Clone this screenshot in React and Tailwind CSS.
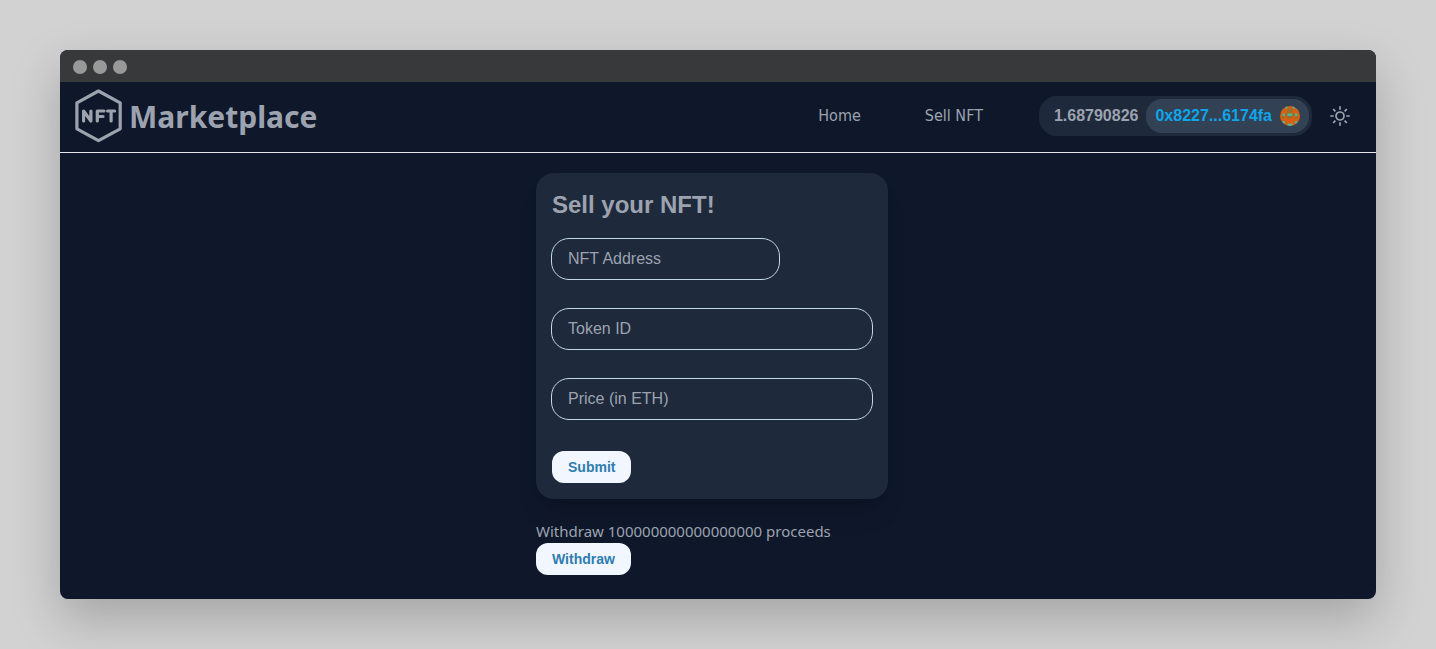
const identicon = [
  "00100100",
  "10022001",
  "00022000",
  "01211210",
  "02022020",
  "00000000",
  "01000010",
  "00011000",
];
const identiconColors = ["#d95f0e", "#50b59b", "#96702a"];

function Avatar() {
  return (
    <svg viewBox="0 0 8 8" className="size-5 rounded-full" aria-hidden="true">
      <rect width="8" height="8" fill={identiconColors[0]} />
      {identicon.flatMap((row, y) =>
        [...row].map((c, x) =>
          c === "0" ? null : (
            <rect key={`${x}-${y}`} x={x} y={y} width="1" height="1" fill={identiconColors[Number(c)]} />
          )
        )
      )}
    </svg>
  );
}

function Logo() {
  return (
    <svg viewBox="0 0 48 54" className="h-[54px] w-12" fill="none" stroke="currentColor" aria-hidden="true">
      <path d="M24.500 2 46.200 13.800V39.800L24.500 51.700 2.900 39.800V13.800Z" strokeWidth="3.200" strokeLinejoin="round" />
      <g strokeWidth="3.200" strokeLinecap="round" strokeLinejoin="round">
        <path d="M9.600 32V22L16.900 32V22" />
        <path d="M23.300 32V22H30M23.300 27.500H29" />
        <path d="M33.600 22H40.600M37.100 22V32" />
      </g>
    </svg>
  );
}

function Sun() {
  return (
    <svg viewBox="0 0 20 20" className="size-5" fill="none" stroke="currentColor" strokeWidth="1.700" aria-hidden="true">
      <circle cx="10" cy="10" r="4" />
      <path d="M10 0.300V3.700M10 16.300V19.700M0.300 10H3.700M16.300 10H19.700M3.200 3.200 5.400 5.400M14.600 14.600 16.800 16.800M3.200 16.800 5.400 14.600M14.600 5.400 16.800 3.200" />
    </svg>
  );
}

function Field({ label, className }) {
  return (
    <input
      type="text"
      aria-label={label}
      placeholder={label}
      className={`h-[42px] rounded-[18px] border border-[#c1d8e6] bg-transparent px-4 text-base text-[#9ca3af] outline-none placeholder:text-[#9ca3af] ${className}`}
    />
  );
}

function Button({ children }) {
  return (
    <button
      type="button"
      className="h-8 rounded-xl bg-[#f2f6ff] px-4 font-['Liberation_Sans',sans-serif] text-sm font-bold text-[#2e7daf]"
    >
      {children}
    </button>
  );
}

export default function App() {
  return (
    <div className="min-h-screen bg-[#d2d2d2] px-[60px] py-[50px] font-['Noto_Sans',sans-serif] text-[15px] text-[#9ca3af]">
      <div className="overflow-hidden rounded-lg bg-[#0f172a] shadow-[0_20px_50px_rgba(0,0,0,0.22)]">
        <div className="flex h-8 items-center gap-1.5 bg-[#38393a] px-[13px] pt-0.5">
          <span className="size-3.5 rounded-full bg-[#999]" />
          <span className="size-3.5 rounded-full bg-[#999]" />
          <span className="size-3.5 rounded-full bg-[#999]" />
        </div>
        <header className="flex items-center justify-between border-b border-gray-200 pt-[7px] pr-[26px] pb-[9px] pl-[14px]">
          <a href="#home" className="flex items-center gap-[7px]">
            <Logo />
            <span className="pt-0.5 text-3xl font-bold">Marketplace</span>
          </a>
          <div className="flex items-center">
            <nav className="mr-14 flex gap-16 font-['DejaVu_Sans_Condensed','DejaVu_Sans',sans-serif] text-base">
              <a href="#home">Home</a>
              <a href="#sell">Sell NFT</a>
            </nav>
            <div className="mr-[18px] flex h-10 items-center gap-2 rounded-[18px] bg-[#1e293b] pr-[3px] pl-[15px] font-['Liberation_Sans',sans-serif] text-base font-bold">
              <span>1.68790826</span>
              <button type="button" className="flex h-[34px] items-center gap-2 rounded-2xl bg-[#334155] px-[9px] text-[#0ea5e9]">
                0x8227...6174fa
                <Avatar />
              </button>
            </div>
            <button type="button" aria-label="Toggle theme">
              <Sun />
            </button>
          </div>
        </header>
        <main className="flex justify-center pt-5 pr-3 pb-6">
          <div className="w-[352px]">
            <form className="rounded-[18px] bg-[#1e293b] px-[15px] pt-4 pb-4 font-['Liberation_Sans',sans-serif] shadow-xl">
              <h2 className="mb-[17px] px-px text-2xl font-bold">Sell your NFT!</h2>
              <div className="mb-[31px] flex flex-col items-start gap-7">
                <Field label="NFT Address" className="w-[229px]" />
                <Field label="Token ID" className="w-full" />
                <Field label="Price (in ETH)" className="w-full" />
              </div>
              <div className="px-px">
                <Button>Submit</Button>
              </div>
            </form>
            <p className="mt-5 leading-6">Withdraw 100000000000000000 proceeds</p>
            <Button>Withdraw</Button>
          </div>
        </main>
      </div>
    </div>
  );
}
